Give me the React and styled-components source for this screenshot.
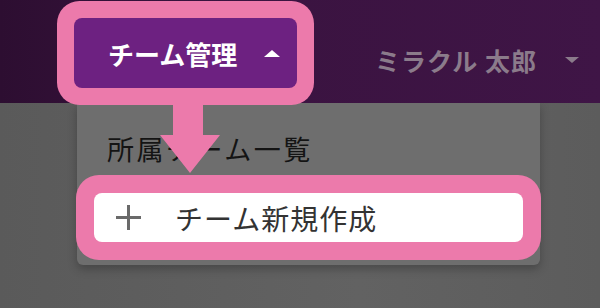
import styled, { createGlobalStyle } from 'styled-components';

const GlobalStyle = createGlobalStyle`
  html, body {
    margin: 0;
    padding: 0;
    background: #5e5e5e;
  }
  body {
    font-family: "Noto Sans CJK JP", "Noto Sans", sans-serif;
    overflow: hidden;
  }
`;

const Page = styled.div`
  position: relative;
  width: 600px;
  height: 308px;
  display: flex;
  flex-direction: column;
  background: linear-gradient(90deg, #5a5a5a 0%, #626262 60%, #5c5c5c 100%);
`;

const Header = styled.header`
  position: relative;
  z-index: 2;
  height: 103px;
  flex-shrink: 0;
  display: flex;
  align-items: flex-start;
  padding: 18px 0 0 74px;
  box-sizing: border-box;
  background: linear-gradient(90deg, #2d0e31 0%, #3a1340 40%, #3f1546 100%);
`;

const NavButton = styled.button`
  width: 223px;
  height: 70px;
  display: flex;
  align-items: center;
  padding: 0 0 0 34px;
  box-sizing: border-box;
  border: none;
  border-radius: 8px;
  background: #6d2181;
  color: #fff;
  font-family: inherit;
  font-size: 26px;
  font-weight: 700;
  box-shadow: ${(p) => (p.$marked ? '0 0 0 17px #ec7aab' : 'none')};
`;

const UserMenu = styled.div`
  margin: 24px 0 0 78px;
  display: flex;
  align-items: center;
  color: #8b7b8b;
  font-size: 25px;
  font-weight: 700;
  letter-spacing: 1px;
`;

const Caret = styled.span`
  display: inline-block;
  width: 0;
  height: 0;
  margin-left: ${(p) => p.$gap}px;
  border-left: ${(p) => p.$size}px solid transparent;
  border-right: ${(p) => p.$size}px solid transparent;
  ${(p) => (p.$up ? 'border-bottom' : 'border-top')}: ${(p) => p.$size - 1}px solid ${(p) => p.$color};
`;

const Body = styled.main`
  flex: 1;
  padding-left: 77px;
`;

const Dropdown = styled.div`
  width: 463px;
  padding: 15px 17px 23px;
  box-sizing: border-box;
  background: #6e6e6e;
  border-radius: 0 0 6px 6px;
  box-shadow: 0 4px 10px rgba(0, 0, 0, 0.25);
  display: flex;
  flex-direction: column;
  gap: 15px;
`;

const MenuItem = styled.div`
  height: ${(p) => (p.$marked ? 49 : 60)}px;
  display: flex;
  align-items: center;
  padding-left: ${(p) => (p.$marked ? 21 : 13)}px;
  border-radius: 8px;
  background: ${(p) => (p.$marked ? '#fff' : 'transparent')};
  color: ${(p) => (p.$marked ? '#333' : '#141414')};
  font-size: ${(p) => (p.$marked ? 28 : 27)}px;
  letter-spacing: ${(p) => (p.$marked ? 1 : 2.5)}px;
  box-shadow: ${(p) => (p.$marked ? '0 0 0 18px #ec7aab' : 'none')};
`;

const PlusIcon = styled.svg`
  width: 27px;
  height: 27px;
  margin-right: 33px;
  flex-shrink: 0;
`;

const Arrow = styled.svg`
  position: absolute;
  z-index: 3;
  left: 160px;
  top: 100px;
  width: 60px;
  height: 74px;
`;

export default function App() {
  return (
    <Page>
      <GlobalStyle />
      <Header>
        <NavButton $marked>
          チーム管理
          <Caret $up $size={8} $gap={27} $color="#fff" />
        </NavButton>
        <UserMenu>
          ミラクル 太郎
          <Caret $size={7} $gap={28} $color="#8b7b8b" />
        </UserMenu>
      </Header>
      <Body>
        <Dropdown>
          <MenuItem>所属チーム一覧</MenuItem>
          <MenuItem $marked>
            <PlusIcon viewBox="0 0 27 27">
              <path d="M13.5 1v25M1 13.5h25" stroke="#6a6a6a" strokeWidth="3" fill="none" />
            </PlusIcon>
            チーム新規作成
          </MenuItem>
        </Dropdown>
      </Body>
      <Arrow viewBox="0 0 60 74">
        <path d="M13 0h30v35h17L30 73 0 35h13z" fill="#ec7aab" />
      </Arrow>
    </Page>
  );
}
